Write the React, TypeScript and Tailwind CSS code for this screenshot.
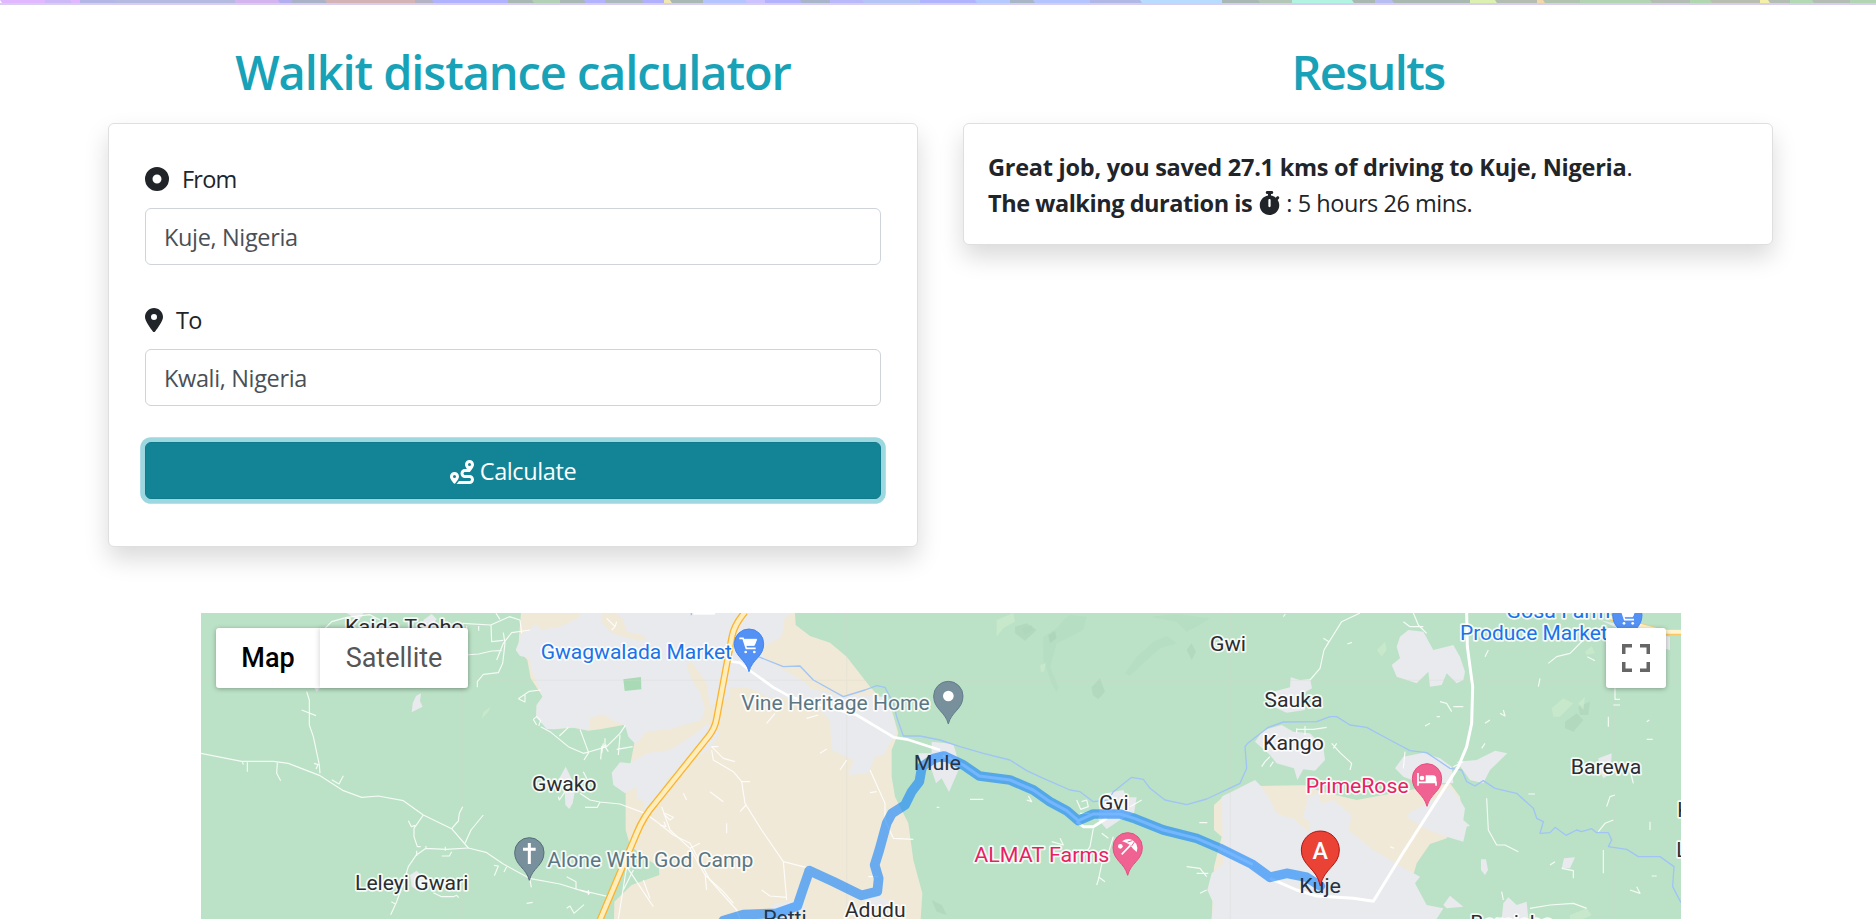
import React from "react";
import { FaCircleDot, FaLocationDot, FaRoute, FaStopwatch } from "react-icons/fa6";

const URBAN = "#e8eaed";
const SAND = "#f0e9d8";
const BODY = "font-['Open_Sans','Noto_Sans',sans-serif]";

/* Banner sliver: [x, colour] stops of the hero picture's bottom edge. */
const banner: [number, string][] = [
  [0, "#e1b8ff"], [45, "#cdb9f5"], [70, "#e1b8ff"], [80, "#b4b6e6"], [115, "#b5bae0"], [235, "#d3b4ee"], [278, "#b2aef0"],
  [292, "#aab2c8"], [325, "#d4b3b6"], [415, "#b4b3c4"], [432, "#b0b2ff"], [508, "#a9b8b4"], [532, "#b2d0b4"], [560, "#a9b8b4"],
  [584, "#b2b2ff"], [605, "#abb9bc"], [642, "#b0b0ff"], [664, "#f1e7b0"], [670, "#a9b8b4"], [703, "#b4c4ff"], [745, "#ccc2ff"],
  [765, "#b2b2ff"], [800, "#a9b5c8"], [830, "#b8b8fa"], [862, "#b4c4f4"], [920, "#b0b4ff"], [975, "#b4c9ff"], [1010, "#a9b6c6"],
  [1033, "#b4c4ff"], [1090, "#b1b8e6"], [1140, "#b8dcff"], [1222, "#a9b8b4"], [1258, "#b2c7b6"], [1292, "#b2f4e2"], [1352, "#a9b8b0"],
  [1375, "#b6bdf0"], [1392, "#a9b8b0"], [1470, "#dcf0b2"], [1495, "#b3bdb2"], [1537, "#f2d8a8"], [1543, "#b0c4b0"], [1580, "#b2d4b2"],
  [1650, "#b3bdb4"], [1690, "#b0d6b0"], [1710, "#b9bfb0"], [1760, "#f4f0a8"], [1768, "#b4bdb4"], [1790, "#b2d8b4"], [1812, "#b3bdb4"],
  [1850, "#b2d4b2"], [1876, "#b3bdb4"],
];

function Banner() {
  return (
    <header className="h-[5px] shrink-0 border-b-2 border-[#d8cfef]">
      <svg className="block" width="1876" height="3" viewBox="0 0 1876 3" aria-hidden="true">
        {banner.slice(0, -1).map(([x, c], i) => (
          <polygon
            key={x}
            fill={c}
            points={`${x},0 ${banner[i + 1][0] + 1},0 ${banner[i + 1][0] + (i % 2 ? 3 : 1)},3 ${x + (i % 2 ? 0 : 2)},3`}
          />
        ))}
      </svg>
    </header>
  );
}

function Card({ className, children }: { className: string; children: React.ReactNode }) {
  return (
    <div className={`rounded-md border border-[#dfdfdf] bg-white shadow-[0_12px_24px_rgba(0,0,0,0.15)] ${className}`}>
      {children}
    </div>
  );
}

function Field({ icon, label, value }: { icon: React.ReactNode; label: string; value: string }) {
  return (
    <div className="mb-9">
      <label className="mb-3 flex h-9 items-center gap-[13px] pt-0.5">
        {icon}
        <span className="leading-9 tracking-[-0.8px]">{label}</span>
      </label>
      <div className="flex h-[57px] items-center rounded-md border border-[#ced4da] px-[18px] pt-0.5 tracking-[-0.35px] text-[#495057]">
        {value}
      </div>
    </div>
  );
}

const BLACK = "#2b2d30";
const BLUE = "#1a73e8";
const SLATE = "#5b7683";
const PINK = "#e91e63";

type Label = [string, number, number, number, string];

/* Place names: text, left, right, baseline, colour. */
const labels: Label[] = [
  ["Kaida Tsoho", 468, 818, 102, BLACK],
  ["Gwagwalada Market", 1055, 1623, 177, BLUE],
  ["Gwako", 1029, 1217, 573, BLACK],
  ["Leleyi Gwari", 498, 832, 871, BLACK],
  ["Alone With God Camp", 1075, 1687, 801, SLATE],
  ["Vine Heritage Home", 1657, 2216, 330, SLATE],
  ["Adudu", 1967, 2144, 952, BLACK],
  ["Gvi", 2730, 2813, 629, BLACK],
  ["ALMAT Farms", 2356, 2755, 786, PINK],
  ["Gwi", 3062, 3165, 154, BLACK],
  ["Sauka", 3226, 3395, 322, BLACK],
  ["Kango", 3222, 3399, 450, BLACK],
  ["PrimeRose", 3350, 3653, 578, PINK],
  ["Barewa", 4145, 4351, 523, BLACK],
  ["Gosa Farm", 3952, 4258, 55, BLUE],
  ["Produce Market", 3813, 4250, 121, BLUE],
  ["Bamisha", 3844, 4086, 989, BLACK],
];

/* Names that the route runs across. */
const routeLabels: Label[] = [
  ["Mule", 2174, 2310, 511, "#253548"],
  ["Petti", 1723, 1847, 975, "#253548"],
  ["Kuje", 3331, 3450, 879, "#253040"],
];

function Name({ label: [t, x1, x2, y, c] }: { label: Label }) {
  return (
    <text x={x1 - 3} y={y} fill={c} textLength={x2 - x1 + 6} lengthAdjust="spacingAndGlyphs">
      {t}
    </text>
  );
}

const urban = [
  "1170,39 1165,55 1110,80 1055,90 1040,73 990,105 987,125 977,150 990,168 1017,173 1025,210 1058,290 1040,315 1038,350 1070,387 1095,388 1140,381 1198,390 1200,355 1240,343 1270,363 1305,375 1315,410 1337,433 1370,395 1440,387 1535,360 1545,325 1530,275 1500,215 1492,190 1505,185 1550,250 1560,320 1620,290 1620,262 1680,265 1730,290 1790,295 1890,330 1920,360 1925,450 1990,480 1975,525 2035,520 2055,470 2080,465 2120,395 2110,350 2080,290 1990,285 1960,290 1860,265 1850,250 1730,180 1710,150 1730,135 1775,110 1785,50 1815,39",
  "1290,487 1265,518 1270,555 1305,580 1340,560 1340,595 1363,605 1363,640 1400,615 1440,555 1425,540 1440,530 1490,495 1560,445 1590,400 1550,370 1530,390 1480,425 1440,450 1370,460 1320,490",
  "1105,540 1127,500 1142,530 1155,570 1148,610 1138,627 1126,615 1124,570",
  "2185,460 2225,460 2225,425 2290,432 2310,500 2295,535 2277,576 2255,535 2238,550 2225,510 2190,500",
  "1750,912 1830,900 1850,930 1800,957 1730,957",
  "2010,900 2060,885 2100,905 2070,930",
  "2730,600 2750,580 2800,570 2810,592 2840,592 2832,640 2790,660 2750,687 2725,660",
  "3230,280 3300,262 3302,232 3330,240 3360,236 3366,265 3340,280 3345,330 3290,338 3250,320",
  "3195,425 3220,390 3275,375 3310,395 3360,400 3400,440 3405,480 3375,512 3340,508 3322,540 3312,505 3260,490 3240,465",
  "3065,957 3070,910 3052,870 3065,820 3100,790 3098,720 3095,590 3195,540 3215,560 3240,600 3260,640 3300,655 3340,650 3355,590 3385,580 3395,610 3430,600 3485,645 3475,690 3550,750 3635,800 3690,830 3675,850 3710,915 3760,925 3740,957",
  "3780,560 3730,600 3655,640 3655,655 3715,690 3770,710 3820,725 3830,680 3840,677 3820,660 3825,625 3810,600",
  "3615,505 3640,470 3700,458 3750,475 3785,500 3790,550 3680,545 3640,530",
  "3800,485 3860,480 3915,452 3952,460 3900,510 3880,550 3840,540",
  "3630,110 3655,90 3700,95 3730,150 3790,135 3810,170 3825,215 3820,240 3800,250 3770,220 3755,255 3720,260 3715,215 3680,250 3620,230 3605,195 3630,175 3620,140",
  "4225,475 4265,460 4262,520 4240,535 4228,510",
  "4115,805 4122,775 4155,772 4140,805",
  "3873,778 3888,778 3894,810 3885,825 3873,810",
  "3760,915 3780,887 3820,920 3770,925",
  "3935,957 3940,910 3955,892 3980,915 4010,905 4015,957",
  "665,337 668,310 678,288 693,280 690,303 698,320",
  "470,39 520,39 515,52 500,58",
  "700,60 725,42 740,57 725,80 705,80",
  "660,825 680,812 702,835 700,868 680,870 665,860",
  "372,262 392,262 380,275",
  "4230,60 4440,110 4440,150 4405,140",
];

const minorRoads = [
  "M33 460L155 484L250 484L295 490L388 526L458 571L515 592L565 588L640 602L700 645L785 686L835 744L888 757L940 792L1018 835L1110 852L1200 880",
  "M350 275L358 300L358 375L370 410L388 495L390 520M335 330L378 347M372 490L384 494L378 507M172 487V515M262 488L260 520L272 542M157 484L160 494M425 539L447 552L460 527",
  "M700 645L672 685L672 710L682 740L692 740M655 662L664 680L676 676M785 686L805 663L808 640L818 620M825 730L843 690L880 645",
  "M835 744L768 748L708 745L678 766L655 800L640 850L620 905L602 944M708 738V748M755 768H778L785 755M766 740V752M680 752V768M604 905L615 911",
  "M730 878L755 890H790L800 886L806 893M912 796L925 798L913 827M950 800L942 816M1010 910L1028 907M1130 830L1158 845V868M1020 840L1024 862M1130 925L1140 918L1152 940L1182 914M1195 870V885",
  "M405 85L425 65L470 52L540 44L570 60M818 70L902 75L958 50L990 60M903 75L905 125L940 121M930 58L918 40M825 165L866 162L905 153L935 152M940 98L945 130L938 190L925 218L880 223L862 245V262M1020 90L965 98L940 130L920 180M866 78V92M990 60L995 100M830 77V85",
  "M985 296L1018 274L1052 270M985 296L1005 306V285M1040 375L1030 358L1040 350L1052 362L1046 378M1052 380L1080 395L1135 440L1180 460L1196 456L1250 440L1290 400L1306 376M1108 408L1135 382M1170 388L1196 458L1182 480M1240 430L1235 460M1250 435L1235 440L1232 478M1290 405L1285 465M1280 448L1328 440M1245 415V440L1255 455",
  "M1170 580L1200 600L1230 606L1290 612L1365 640L1400 665L1450 705L1500 730L1560 840L1640 930L1650 957M1105 590L1108 600L1125 575M1230 606L1222 622L1185 622M1180 515L1200 555",
  "M1415 620L1440 690L1500 745L1545 825L1600 875L1630 910M1425 640L1450 652L1440 660L1420 640M1410 675L1428 680L1422 665M1500 745L1530 730M1545 820L1550 870",
  "M1565 450L1570 480L1630 515L1655 545L1665 610L1715 690L1780 785L1860 805M1585 440L1565 440L1600 475L1635 485M1655 545H1680M1650 635L1668 615M1780 785L1790 900M1715 870L1740 888L1790 892",
  "M1310 800L1350 860L1390 920M1310 800L1285 957M1170 870L1255 890M1360 840L1380 895M2040 510L2085 610V660L2110 715L2170 718M2040 578L2060 575M2035 830H2065M1330 810L1300 870",
  "M1250 55L1275 80L1265 90M1275 80L1280 65M1730 370L1755 340M1850 355L1885 345M1890 460L1910 447M1950 510L1970 480M1480 580L1490 600M1560 575L1600 605M1610 670V700",
  "M3360 240L3390 205L3402 150L3455 65L3510 39M3400 115L3417 125L3408 140M3472 132L3486 127M3280 50L3286 42M3320 388H3370L3410 382M3345 378V405M3320 385V398",
  "M2340 598H2380M2515 588L2525 605L2510 600M2660 600L2672 628L2695 620L2690 600L2675 605M2670 640L2700 640M2710 685L2700 740L2680 770M2735 700L2755 715M2740 770L2725 840L2720 855M2725 830L2745 845M2770 710L2750 775M2585 725L2620 735L2610 715M2990 800L3030 805L3050 830M3020 820H3055M3030 880L3050 870M3028 668H3052M2240 622H2248M2820 620L2855 600",
  "M3425 430L3450 458L3485 490L3480 510M3440 430L3430 445M3240 470L3225 485L3215 500M3250 485L3240 500",
  "M3670 39L3685 75L3710 100M3640 65L3660 80H3700M4075 190L4100 170L4140 160L4180 120M4275 265V298H4290M4270 315H4290M4050 235L4045 260M3895 150L3885 170M4192 170L4215 182",
  "M3750 305L3770 310L3785 335M3820 320H3790M3900 360L3885 370M3930 340L3945 348L3940 330M3705 378L3720 370M4255 350V380M4370 365L4378 360M4370 418H4388M3875 445L3885 430M3740 350H3750",
  "M3890 595L3895 690L3920 735L3945 735L3985 755M4225 695L4245 670L4270 660M4015 582H4035M4250 620L4260 590L4275 585M4240 750V820M4115 805L4150 812V835M4320 870L4350 880L4340 860M4385 828H4400M3600 740L3612 745M4380 690V665M4020 925L4080 915L4150 910L4190 925M3935 875L3940 900M4095 785L4080 795",
  "M3820 485L3790 500M4320 510L4330 550M3640 505L3645 455",
];

const rivers = [
  "M1705 170L1780 200L1830 198L1870 240L1960 290L2025 270L2060 257L2085 262L2110 310L2120 350L2140 408L2190 408L2250 420L2310 440L2380 460L2460 480L2510 512L2560 535L2640 570L2670 575L2710 605L2755 600L2770 575L2825 532L2860 538L2880 565L2925 600L2990 614L3050 597L3150 550L3170 505L3165 440L3175 428L3235 382L3280 366L3380 365L3420 350L3440 350L3480 375L3530 382L3600 420L3660 452L3710 458L3780 505L3815 510L3830 545L3855 558L3880 542L3915 565L3980 580L4030 625L4040 655L4060 665L4050 700L4080 698L4095 682L4128 706L4160 690L4175 695L4205 686L4220 698H4255L4265 720L4255 740L4310 748L4345 770L4410 770L4452 800L4448 860L4473 908",
  "M1504 39V46",
];

const relief = [
  "2475,80 2510,70 2540,90 2505,122 2475,100",
  "2560,110 2600,85 2620,60 2640,45 2690,50 2680,90 2600,130 2580,200 2605,260 2600,278 2585,250 2560,180",
  "2805,220 2840,170 2890,125 2930,108 2960,130 2910,145 2860,190 2820,228",
  "2880,50 2960,42 3060,55 3020,80 2990,95 2960,65",
  "2990,150 3005,130 3018,155 3005,180",
  "2705,262 2730,235 2745,275 2725,298 2708,285",
  "4125,365 4160,340 4180,360 4150,395 4125,385",
  "4165,320 4200,305 4195,345 4170,345",
  "2225,900 2255,915 2270,945 2240,935",
];

const lightRelief = [
  "2420,60 2470,39 2475,65 2440,85 2420,110",
  "2550,195 2568,190 2562,215 2552,215",
  "4085,325 4120,295 4150,310 4110,350 4090,350",
  "4165,310 4185,290 4180,330",
  "3560,150 3585,125 3590,150 3575,170",
  "4185,155 4205,138 4215,160 4190,165",
  "875,357 880,335 902,320 895,335",
  "4140,945 4190,925 4205,945 4180,957 4140,957",
];

const ROUTE =
  "M1600 962L1660 944L1760 940L1822 918L1838 870L1858 812L1930 845L2014 886L2062 874L2066 835L2054 795L2068 750L2090 670L2106 640L2145 615L2165 575L2188 545L2196 500L2232 475L2262 468L2320 495L2368 528L2460 540L2530 570L2580 605L2630 632L2665 662L2710 642L2790 642L2835 656L2920 690L3020 715L3090 745L3185 792L3240 832L3290 820L3350 832L3391 858";

function Pin({ x, y, fill, stroke, children }: { x: number; y: number; fill: string; stroke: string; children: React.ReactNode }) {
  return (
    <g transform={`translate(${x} ${y})`}>
      <path d="M0 84C-9 46 -44 40 -44 0A44 44 0 0 1 44 0C44 40 9 46 0 84Z" fill={fill} stroke={stroke} strokeWidth="3" />
      {children}
    </g>
  );
}

function Cart() {
  return (
    <g fill="none" stroke="#fff" strokeWidth="5">
      <path d="M-29 -16H-18L-8 14H20" />
      <path d="M-15 -13H23L16 5H-9Z" fill="#fff" strokeWidth="3" />
      <circle cx="-10" cy="25" r="4" fill="#fff" stroke="none" />
      <circle cx="16" cy="25" r="4" fill="#fff" stroke="none" />
    </g>
  );
}

function MapDrawing() {
  return (
    <svg className="block" width="1480" height="306" viewBox="33 39 4440 918" fontFamily="Roboto, sans-serif">
      <rect x="33" y="39" width="4440" height="918" fill="#bbe2c6" />
      <polygon
        fill={SAND}
        points="1815,39 1817,75 1860,108 1920,128 1970,170 2040,260 2105,330 2125,400 2105,450 2105,530 2115,590 2155,670 2170,780 2197,880 2192,957 1272,957 1273,905 1325,855 1408,825 1407,800 1360,770 1320,735 1307,690 1307,565 1333,430 1328,400 1300,375 1230,388 1195,392 1150,383 1095,387 1065,375 1040,350 1040,315 1058,290 1022,235 1012,180 985,150 987,110 993,39"
      />
      <polygon
        fill={SAND}
        points="3072,615 3105,585 3210,558 3345,556 3395,575 3500,600 3660,570 3780,550 3810,590 3815,630 3770,715 3720,732 3680,790 3670,825 3635,800 3400,900 3065,957 3072,800 3095,710 3072,690"
      />
      <g fill={URBAN}>
        {urban.map((p, i) => (
          <polygon key={i} points={p} />
        ))}
      </g>
      <path d="M1238 39L1235 65L1265 100L1320 115L1345 122L1370 120L1358 105L1310 95L1300 60L1280 39Z" fill={SAND} />
      <path d="M1497 190Q1500 235 1545 280L1552 335" fill="none" stroke={SAND} strokeWidth="12" />
      <polygon points="3310,655 3360,700 3360,665 3335,650" fill={SAND} />
      <polygon points="1300,238 1353,231 1354,268 1304,273" fill="#a8dab5" />
      <g fill="#aed6bb">
        {relief.map((p, i) => (
          <polygon key={i} points={p} fillOpacity={i === 1 || i === 2 || i === 3 ? 0.35 : 0.7} />
        ))}
        <polygon points="2495,85 2525,75 2530,90 2505,105" fillOpacity="0.6" />
        <polygon points="2575,105 2595,93 2600,115 2580,130" />
      </g>
      <g fill="#cbeacb" fillOpacity="0.75">
        {lightRelief.map((p, i) => (
          <polygon key={i} points={p} />
        ))}
      </g>
      <path d="M33 241H4473M817 39V957M1970 39V957M3121 39V957M4274 39V957" stroke="#d6d8cf" strokeWidth="2" opacity="0.4" />
      <g fill="none" stroke="#a0c4f5" strokeWidth="4" strokeLinejoin="round">
        {rivers.map((d) => (
          <path key={d} d={d} />
        ))}
      </g>
      <g fill="none" stroke="#fff" strokeOpacity="0.85" strokeWidth="3.5" strokeLinejoin="round">
        {minorRoads.map((d) => (
          <path key={d} d={d} />
        ))}
      </g>
      <g fill="none" stroke="#fff" strokeLinejoin="round">
        <path d="M1610 183L1650 188L1677 210L1750 262L1800 290L2000 345L2112 412L2150 418L2250 450" strokeWidth="8" />
        <path d="M3830 39L3832 140L3848 260L3845 370L3830 440L3805 500L3635 765L3550 904L3490 895L3380 888L3320 870L3240 835" strokeWidth="9" />
        <path d="M2660 665L2680 680L2710 680L2750 655" strokeWidth="9" />
        <path d="M1510 41H1575" strokeWidth="6" />
      </g>
      <g fill="none" strokeLinejoin="round">
        <path d="M1665 36Q1632 75 1626 110L1606 215L1580 355Q1575 385 1555 410L1395 610Q1360 650 1340 700L1230 960" stroke="#fbb431" strokeWidth="21" />
        <path d="M1665 36Q1632 75 1626 110L1606 215L1580 355Q1575 385 1555 410L1395 610Q1360 650 1340 700L1230 960" stroke="#ffeebb" strokeWidth="13" />
        <path d="M4255 50L4340 75L4420 97H4480" stroke="#fbc860" strokeWidth="17" />
        <path d="M4255 50L4340 75L4420 95H4480" stroke="#fff3d0" strokeWidth="12" />
      </g>

      <g fontSize="61" stroke="#fff" strokeOpacity="0.85" strokeWidth="10" strokeLinejoin="round" paintOrder="stroke">
        {labels.map((l) => (
          <Name key={l[0]} label={l} />
        ))}
        <text x="4462" y="651" fill={BLACK}>K</text>
        <text x="4459" y="771" fill={BLACK}>L</text>
      </g>

      <g fill="none" strokeLinejoin="round" strokeLinecap="round">
        <path d={ROUTE} stroke="#1a86fa" strokeOpacity="0.63" strokeWidth="29" />
        <path d="M2262 468L2320 495L2368 528L2460 540L2530 570L2580 605L2630 632L2665 662L2710 642L2790 642L2835 656L2920 690L3020 715L3090 745L3185 792" stroke="#74b6ff" strokeWidth="9" />
      </g>
      <g fontSize="61">
        {routeLabels.map((l) => (
          <Name key={l[0]} label={l} />
        ))}
      </g>

      <Pin x={1677} y={131} fill="#5491f5" stroke="#4285f4"><Cart /></Pin>
      <Pin x={4312} y={45} fill="#5491f5" stroke="#4285f4"><Cart /></Pin>
      <Pin x={2275} y={288} fill="#78909c" stroke="#607d8b"><circle r="16" fill="#fff" /></Pin>
      <Pin x={1018} y={757} fill="#78909c" stroke="#546e7a">
        <path d="M0 -28V35M-19 -9H19" stroke="#fff" strokeWidth="9" />
      </Pin>
      <Pin x={2813} y={742} fill="#f06292" stroke="#e74c80">
        <circle cx="-22" cy="-3" r="7" fill="#fff" />
        <path d="M-17 -18Q8 -36 26 -10Q32 2 27 14L16 4L8 -6L-4 -14Z" fill="#fff" />
        <path d="M8 -6L-18 21" stroke="#fff" strokeWidth="5" />
        <path d="M0 -16L14 -20M12 -4L20 -16" stroke="#f06292" strokeWidth="3" />
      </Pin>
      <Pin x={3711} y={535} fill="#f06292" stroke="#e74c80">
        <path d="M-27 -16V22M-27 12H27V22" fill="none" stroke="#fff" strokeWidth="5" />
        <circle cx="-15" cy="-1" r="7" fill="#fff" />
        <path d="M-4 -9H18Q28 -9 28 2V12H-4Z" fill="#fff" />
      </Pin>
      <g transform="translate(3391 750)">
        <path d="M0 108C-10 54 -57 48 -57 0A57 57 0 0 1 57 0C57 48 10 54 0 108Z" fill="#ea4335" stroke="#b31412" strokeWidth="3" />
        <text y="26" fill="#fff" fontSize="70" fontWeight="500" textAnchor="middle">A</text>
      </g>
    </svg>
  );
}

export default function App() {
  return (
    <div className={`flex h-[919px] w-[1876px] flex-col overflow-hidden bg-white text-[23.5px] text-[#212529] ${BODY}`}>
      <Banner />
      <main className="flex min-h-0 flex-1 flex-col pt-[38px]">
        <div className="flex items-start gap-[45px] pl-[108px]">
          <section className="w-[810px]">
            <h1 className="mb-[22px] text-center text-[47px] leading-[58px] font-semibold tracking-[-1.1px] text-[#17a2b8]">
              Walkit distance calculator
            </h1>
            <Card className="h-[424px] px-9 pt-9">
              <Field icon={<FaCircleDot className="size-6" />} label="From" value="Kuje, Nigeria" />
              <Field icon={<FaLocationDot className="h-6 w-[18px]" />} label="To" value="Kwali, Nigeria" />
              <button className="flex h-[57px] w-full items-center justify-center gap-1.5 rounded-md border border-[#117a8b] bg-[#138496] pt-0.5 tracking-[-0.4px] text-white shadow-[0_0_0_4.8px_#9dd8e1]">
                <FaRoute className="size-6" />
                Calculate
              </button>
            </Card>
          </section>
          <section className="w-[810px]">
            <h1 className="mb-[22px] text-center text-[47px] leading-[58px] font-semibold tracking-[-1.6px] text-[#17a2b8]">
              Results
            </h1>
            <Card className="px-6 pt-[25px] pb-[23px]">
              <p className="leading-9">
                <b className="tracking-[-0.25px]">Great job, you saved 27.1 kms of driving to Kuje, Nigeria</b>.
              </p>
              <p className="flex items-center leading-9">
                <b className="tracking-[-0.45px]">The walking duration is</b>
                <FaStopwatch className="mr-1.5 ml-[7px] h-6 w-[21px]" />
                <span className="tracking-[-0.45px]">: 5 hours 26 mins.</span>
              </p>
            </Card>
          </section>
        </div>

        <section className="relative mt-[66px] ml-[201px] h-[306px] w-[1480px] shrink-0 overflow-hidden font-[Roboto,sans-serif]">
          <MapDrawing />
          <div className="absolute top-[15px] left-[15px] flex h-[60px] rounded-[3px] bg-white text-[27px] shadow-[0_1px_5px_rgba(0,0,0,0.3)]">
            <button className="w-[104px] font-medium text-black">Map</button>
            <button className="w-[148px] text-[#565656] shadow-[-1px_0_5px_rgba(0,0,0,0.15)]">Satellite</button>
          </div>
          <button className="absolute top-[15px] right-[15px] flex size-[60px] items-center justify-center rounded-[3px] bg-white shadow-[0_1px_5px_rgba(0,0,0,0.3)]">
            <svg width="28" height="28" viewBox="0 0 28 28" fill="none" stroke="#666" strokeWidth="3.5">
              <path d="M1.75 10V1.75H10M18 1.75H26.25V10M26.25 18V26.25H18M10 26.25H1.75V18" />
            </svg>
          </button>
        </section>
      </main>
    </div>
  );
}
